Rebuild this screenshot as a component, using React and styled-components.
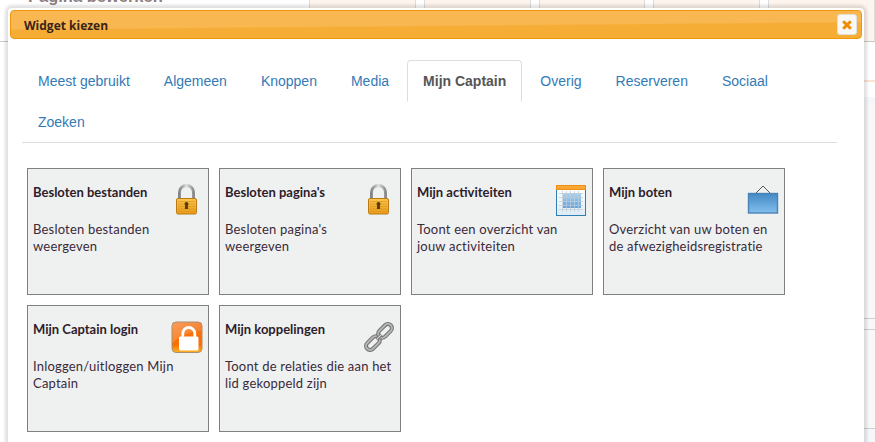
import styled, { createGlobalStyle } from "styled-components";

const tabs = ["Meest gebruikt", "Algemeen", "Knoppen", "Media", "Mijn Captain", "Overig", "Reserveren", "Sociaal", "Zoeken"];

const LockIcon = () => (
  <svg width="32" height="32" viewBox="0 0 32 32">
    <defs>
      <linearGradient id="lockBody" x1="0" y1="0" x2="0" y2="1">
        <stop offset="0" stopColor="#fbc64f" />
        <stop offset="1" stopColor="#eb9d18" />
      </linearGradient>
      <linearGradient id="lockBow" x1="0" y1="0" x2="1" y2="0">
        <stop offset="0" stopColor="#868686" />
        <stop offset="0.5" stopColor="#dedede" />
        <stop offset="1" stopColor="#8c8c8c" />
      </linearGradient>
    </defs>
    <path d="M8.5 15V8.5a7 7 0 0 1 14 0V15" fill="none" stroke="url(#lockBow)" strokeWidth="3" />
    <rect x="5.5" y="14.5" width="20" height="15.5" rx="1.5" fill="url(#lockBody)" stroke="#b97a12" />
    <path d="M7 17.5h17M7 20h17M7 22.5h17M7 25h17M7 27.5h17" stroke="#d9921a" strokeWidth="0.8" opacity="0.8" />
    <circle cx="15.5" cy="20" r="2" fill="#5b3a0c" />
    <path d="M14.5 20h2l.7 5h-3.4z" fill="#5b3a0c" />
  </svg>
);

const CalendarIcon = () => (
  <svg width="32" height="32" viewBox="0 0 32 32">
    <defs>
      <linearGradient id="calBody" x1="0" y1="0" x2="0" y2="1">
        <stop offset="0" stopColor="#ffffff" />
        <stop offset="1" stopColor="#dcecf8" />
      </linearGradient>
      <linearGradient id="calCells" x1="0" y1="0" x2="0" y2="1">
        <stop offset="0" stopColor="#a5d4f7" />
        <stop offset="1" stopColor="#5fa3e2" />
      </linearGradient>
    </defs>
    <rect x="1.5" y="2.5" width="29" height="29" fill="url(#calBody)" stroke="#2f7fb5" />
    <rect x="1.5" y="1.5" width="29" height="4" fill="#f9a633" stroke="#ef8f13" />
    <rect x="8" y="9" width="18" height="15" fill="url(#calCells)" />
    <path d="M4 9.5h24M4 13.5h24M4 17.5h24M4 21.5h24M4 25.5h24M7.5 7v21M11.5 7v21M15.5 7v21M19.5 7v21M23.5 7v21" stroke="#c4ccd2" strokeWidth="1" opacity="0.75" />
  </svg>
);

const SignIcon = () => (
  <svg width="32" height="32" viewBox="0 0 32 32">
    <defs>
      <linearGradient id="signBody" x1="0" y1="0" x2="0" y2="1">
        <stop offset="0" stopColor="#4289c4" />
        <stop offset="1" stopColor="#83bfee" />
      </linearGradient>
    </defs>
    <path d="M8 10l8-8 8 8" fill="none" stroke="#555" strokeWidth="1" />
    <rect x="1.5" y="9.5" width="29" height="19.5" fill="url(#signBody)" stroke="#4a83b6" strokeWidth="1.4" />
  </svg>
);

const LoginIcon = () => (
  <svg width="32" height="32" viewBox="0 0 32 32">
    <defs>
      <linearGradient id="loginBody" x1="0" y1="0" x2="0" y2="1">
        <stop offset="0" stopColor="#f4721a" />
        <stop offset="0.75" stopColor="#fb6f00" />
        <stop offset="1" stopColor="#ffb422" />
      </linearGradient>
      <linearGradient id="loginGloss" x1="0" y1="0" x2="1" y2="1">
        <stop offset="0" stopColor="#fff" stopOpacity="0.3" />
        <stop offset="1" stopColor="#fff" stopOpacity="0.02" />
      </linearGradient>
    </defs>
    <rect x="1" y="1" width="30" height="30.5" rx="4" fill="url(#loginBody)" stroke="#a8906f" />
    <path d="M1.5 5a3.5 3.5 0 0 1 3.5-3.5h22a3.5 3.5 0 0 1 3.5 3.5v5C20 10 10 14 1.5 22z" fill="url(#loginGloss)" />
    <path d="M11.8 17v-4.5a6 6 0 0 1 12 0V17" fill="none" stroke="#fff" strokeWidth="2.8" />
    <rect x="8" y="15.5" width="19.5" height="14" rx="1.5" fill="#fff" />
  </svg>
);

const ChainIcon = () => (
  <svg width="32" height="32" viewBox="0 0 32 32">
    <g fill="none" transform="rotate(-45 16 16) translate(16 16) scale(0.9) translate(-16 -16)">
      <rect x="-2.5" y="11.5" width="18" height="9" rx="4.5" stroke="#707070" strokeWidth="4.4" />
      <rect x="-2.5" y="11.5" width="18" height="9" rx="4.5" stroke="#b5b5b5" strokeWidth="2.2" />
      <rect x="16.5" y="11.5" width="18" height="9" rx="4.5" stroke="#707070" strokeWidth="4.4" />
      <rect x="16.5" y="11.5" width="18" height="9" rx="4.5" stroke="#b5b5b5" strokeWidth="2.2" />
      <path d="M12 16h8" stroke="#707070" strokeWidth="3" />
      <path d="M12 16h8" stroke="#e4e4e4" strokeWidth="1.2" />
    </g>
  </svg>
);

const widgets = [
  { title: "Besloten bestanden", text: "Besloten bestanden weergeven", icon: <LockIcon /> },
  { title: "Besloten pagina's", text: "Besloten pagina's weergeven", icon: <LockIcon /> },
  { title: "Mijn activiteiten", text: "Toont een overzicht van jouw activiteiten", icon: <CalendarIcon /> },
  { title: "Mijn boten", text: "Overzicht van uw boten en de afwezigheidsregistratie", icon: <SignIcon /> },
  { title: "Mijn Captain login", text: "Inloggen/uitloggen Mijn Captain", icon: <LoginIcon /> },
  { title: "Mijn koppelingen", text: "Toont de relaties die aan het lid gekoppeld zijn", icon: <ChainIcon /> },
];

export default function App() {
  return (
    <Page>
      <GlobalStyle />
      <TopBar>
        <PageTitle>Pagina bewerken</PageTitle>
        <TopCell />
        <TopCell />
        <TopCell />
        <TopCell />
        <TopCell />
      </TopBar>
      <Bands>
        <Band $h={38} />
        <Band $h={2} $bg="#fde3d3" />
        <Band $h={15} />
        <Band $h={6} $bg="#f5f7fa" />
        <Band $h={216} $bg="#f8f8f8" $line />
        <Band $h={11} $bg="#f8f8f8" $line />
        <Band $h={99} $bg="#f8f8f8" $line />
        <Band $h={14} $bg="#f5f7fa" $line />
      </Bands>

      <Dialog>
        <DialogHeader>
          <DialogTitle>Widget kiezen</DialogTitle>
          <CloseButton aria-label="Sluiten">
            <svg width="12" height="12" viewBox="0 0 12 12">
              <path d="M2.2 2.2l7.6 7.6M9.8 2.2l-7.6 7.6" stroke="#f08c00" strokeWidth="3" />
            </svg>
          </CloseButton>
        </DialogHeader>
        <DialogBody>
          <TabList>
            {tabs.map((tab) => (
              <Tab key={tab} $active={tab === "Mijn Captain"}>{tab}</Tab>
            ))}
          </TabList>
          <WidgetGrid>
            {widgets.map((w) => (
              <Card key={w.title}>
                <CardHead>
                  <CardTitle>{w.title}</CardTitle>
                  <CardIcon>{w.icon}</CardIcon>
                </CardHead>
                <CardText>{w.text}</CardText>
              </Card>
            ))}
          </WidgetGrid>
        </DialogBody>
      </Dialog>
    </Page>
  );
}

const GlobalStyle = createGlobalStyle`
  html, body {
    margin: 0;
    padding: 0;
    background: #fff;
    overflow: hidden;
  }
  * {
    box-sizing: border-box;
  }
`;

const Page = styled.div`
  position: relative;
  display: flex;
  flex-direction: column;
  height: 442px;
  overflow: hidden;
`;

const TopBar = styled.div`
  display: flex;
  gap: 8px;
  flex: none;
  height: 42px;
  border-bottom: 1px solid #c9c9c9;
`;

const PageTitle = styled.div`
  width: 301px;
  margin-top: -14px;
  padding-left: 28px;
  font: bold 16.5px/20px "Liberation Sans", sans-serif;
  color: #8d7d80;
`;

const TopCell = styled.div`
  flex: 1;
  background: #fdf4ee;
  border-left: 1px solid #dcdcdc;
  border-right: 1px solid #dcdcdc;
`;

const Bands = styled.div`
  align-self: flex-end;
  width: 11px;
`;

const Band = styled.div`
  height: ${(props) => props.$h}px;
  background: ${(props) => props.$bg || "#fff"};
  border-bottom: ${(props) => (props.$line ? "1px solid #cfcfcf" : "none")};
`;

const Dialog = styled.div`
  position: absolute;
  top: 8px;
  left: 8px;
  width: 856px;
  height: 460px;
  padding: 2px;
  background: #fff;
  border-radius: 4px;
  box-shadow: 0 0 3px 3px rgba(0, 0, 0, 0.12);
`;

const DialogHeader = styled.div`
  display: flex;
  align-items: center;
  justify-content: space-between;
  height: 29px;
  padding: 0 4px 0 13px;
  border: 1px solid #ee960c;
  border-radius: 4px;
  background: linear-gradient(179.5deg, #f9b751 0 52%, #f6ad35 56%);
`;

const DialogTitle = styled.span`
  padding-top: 1px;
  font: bold 12px "Open Sans", sans-serif;
  color: #3a2416;
`;

const CloseButton = styled.button`
  display: flex;
  align-items: center;
  justify-content: center;
  width: 20px;
  height: 21px;
  padding: 0;
  border: 1px solid #e4dfd6;
  border-radius: 3px;
  background: #f8f8f8;
`;

const DialogBody = styled.div`
  padding: 21px 0 0 12px;
`;

const TabList = styled.div`
  display: flex;
  flex-wrap: wrap;
  width: 815px;
  gap: 0 2px;
  border-bottom: 1px solid #ddd;
`;

const Tab = styled.div`
  height: 42px;
  padding: 0 15px;
  margin-bottom: -1px;
  font: ${(props) => (props.$active ? "bold" : "normal")} 14px/41px "Liberation Sans", Arial, sans-serif;
  color: ${(props) => (props.$active ? "#555" : "#337ab7")};
  background: ${(props) => (props.$active ? "#fff" : "transparent")};
  border: 1px solid ${(props) => (props.$active ? "#ddd" : "transparent")};
  border-bottom-color: ${(props) => (props.$active ? "#fff" : "transparent")};
  border-radius: 4px 4px 0 0;
`;

const WidgetGrid = styled.div`
  display: grid;
  grid-template-columns: repeat(4, 182px);
  grid-auto-rows: 127px;
  gap: 10px;
  margin: 25px 0 0 5px;
`;

const Card = styled.div`
  padding: 15px 5px 0;
  background: #eff1f1;
  border: 1px solid #808080;
  font-family: "Lato", "Open Sans", sans-serif;
  color: #3a2a3a;
`;

const CardHead = styled.div`
  display: flex;
  justify-content: space-between;
`;

const CardTitle = styled.div`
  font-size: 13px;
  font-weight: bold;
  line-height: 17px;
  color: #2e1c2a;
`;

const CardIcon = styled.div`
  flex: none;
  width: 32px;
  height: 32px;
`;

const CardText = styled.div`
  margin-top: 5px;
  padding-right: 2px;
  font-size: 13px;
  letter-spacing: 0.2px;
  line-height: 17px;
`;
